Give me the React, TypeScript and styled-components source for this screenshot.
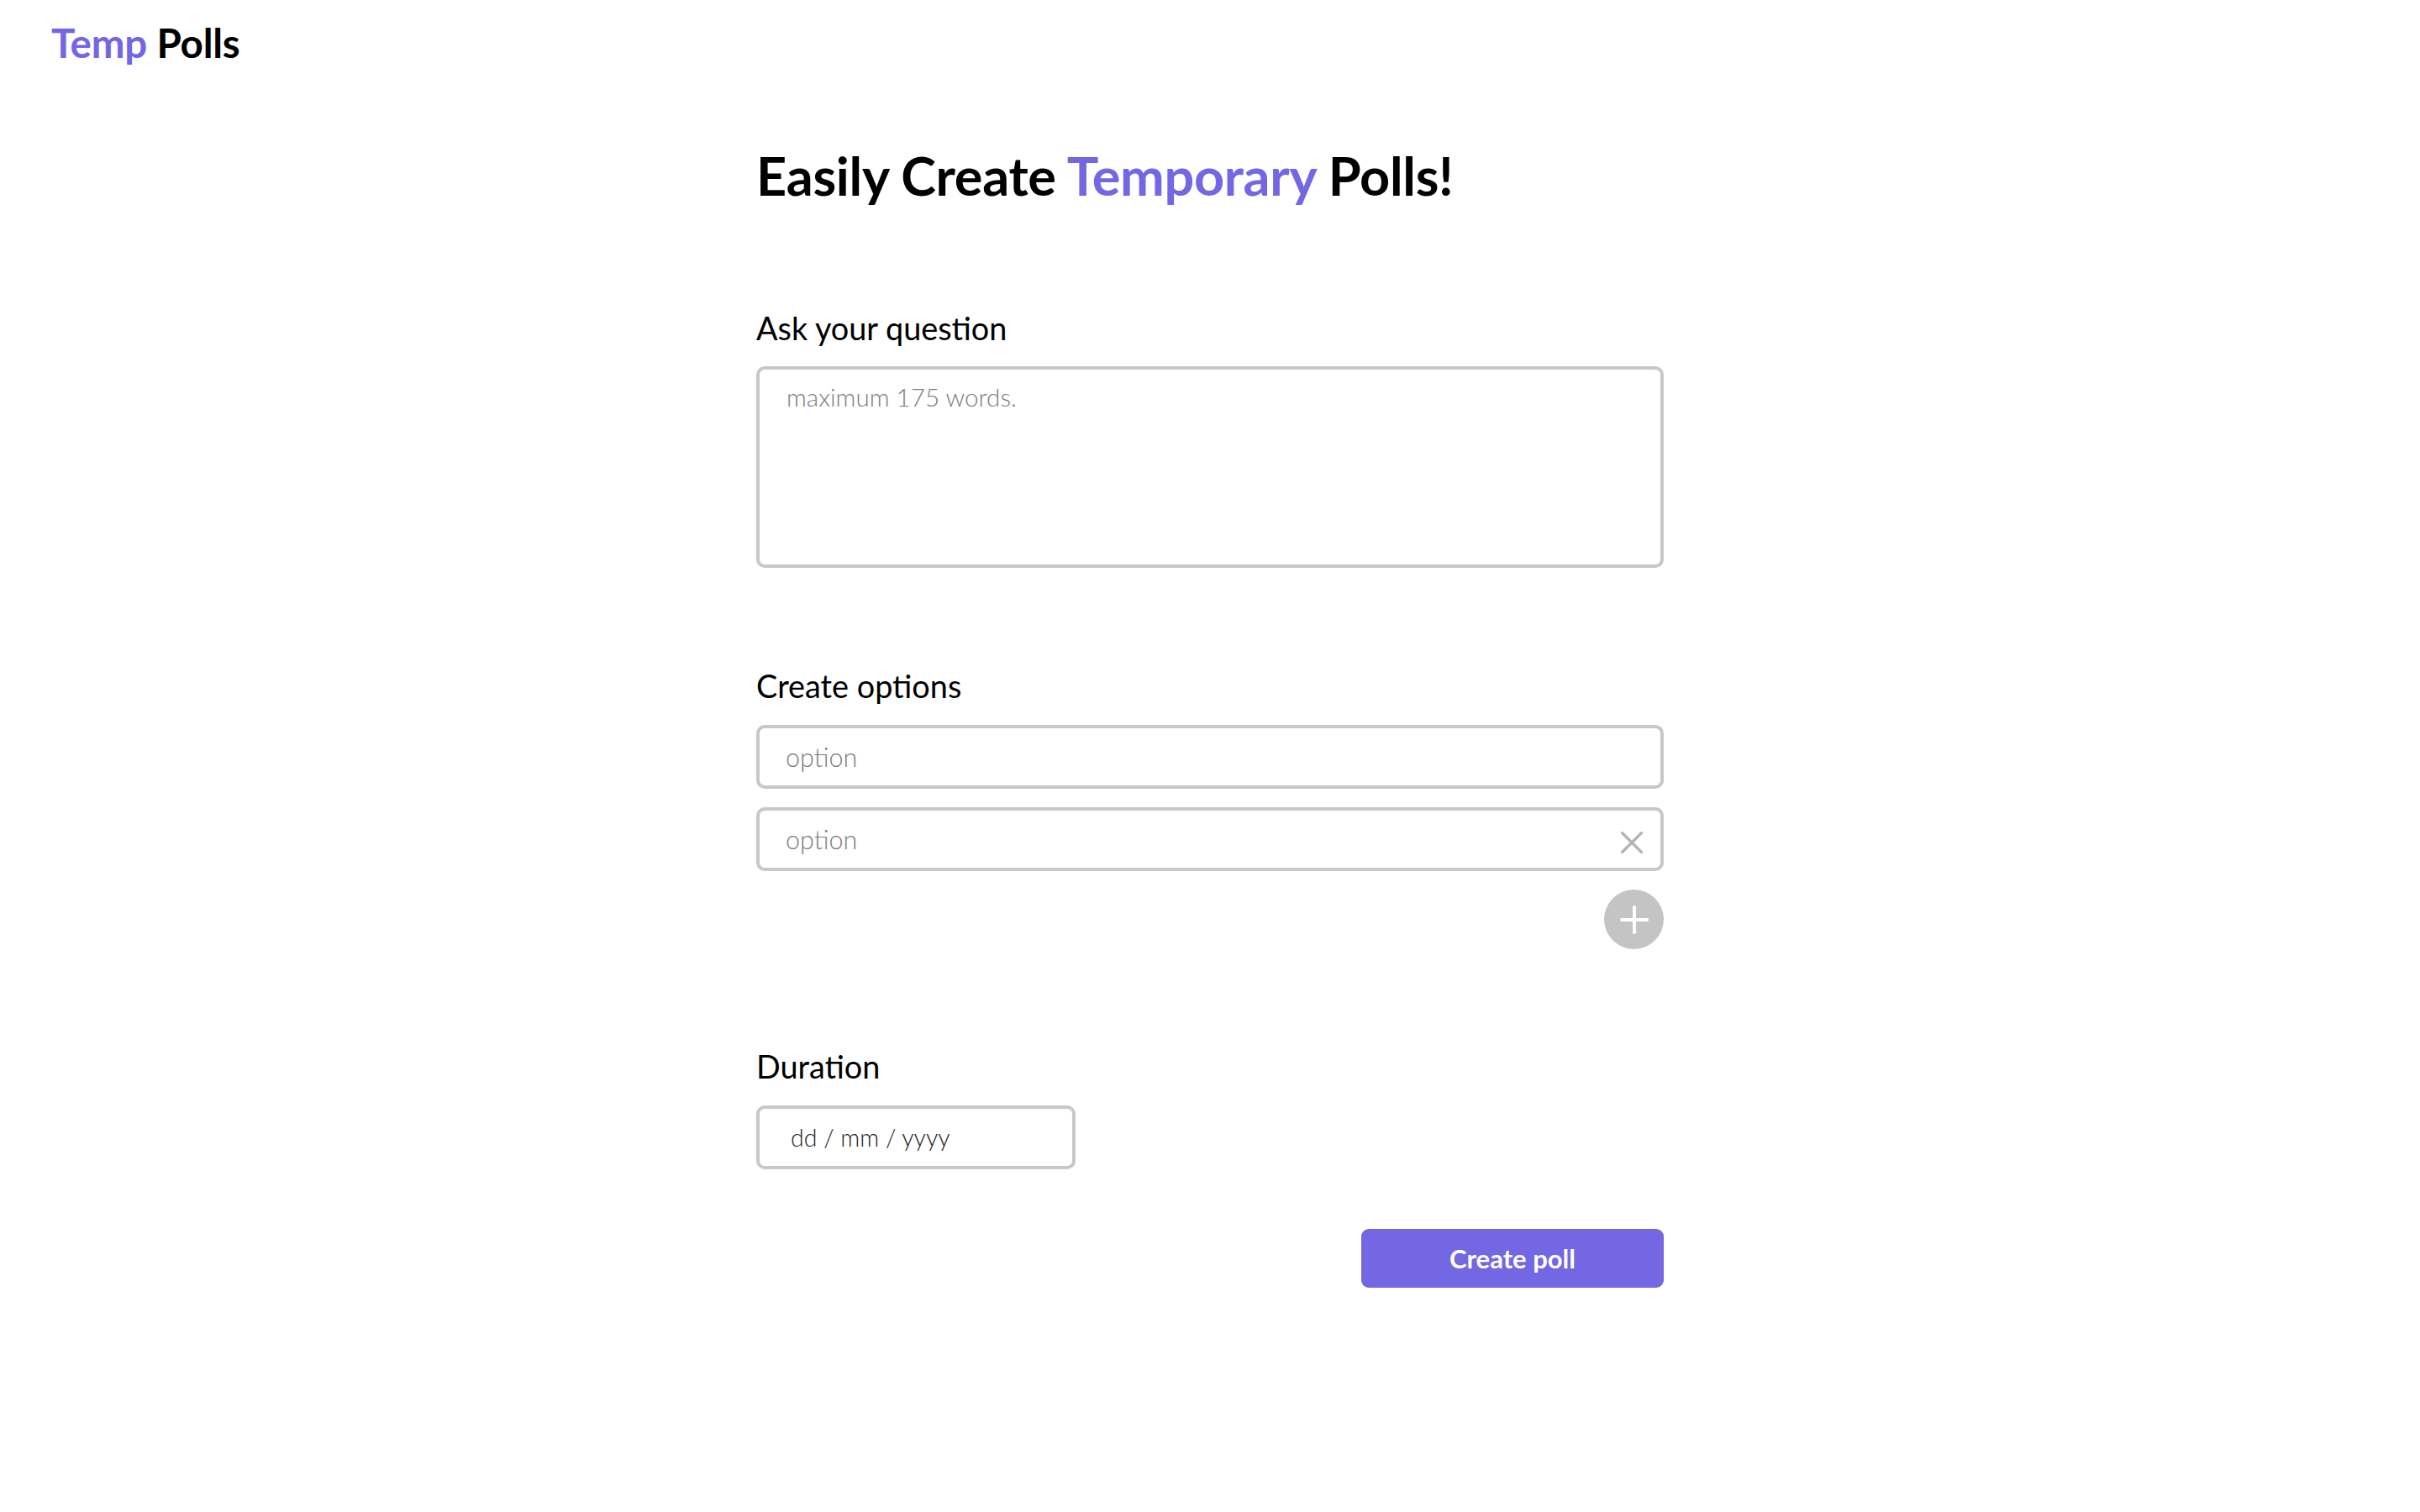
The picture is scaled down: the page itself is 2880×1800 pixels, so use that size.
import React from "react";
import styled, { createGlobalStyle } from "styled-components";

const GlobalStyle = createGlobalStyle`
  html, body {
    margin: 0;
    padding: 0;
    background: #ffffff;
  }
  body {
    font-family: Lato, "Open Sans", "Noto Sans", sans-serif;
    color: #000000;
  }
  * { box-sizing: border-box; }
`;

const PURPLE = "#7367e3";
const BORDER = "#c8c8c8";

const Header = styled.header`
  padding: 27px 0 0 61px;
`;

const Logo = styled.div`
  font-size: 47.5px;
  line-height: 1;
  font-weight: 700;
  letter-spacing: -0.2px;
`;

const Accent = styled.span`
  color: ${PURPLE};
`;

const Main = styled.main`
  width: 1080px;
  margin: 0 auto;
  display: flex;
  flex-direction: column;
`;

const Title = styled.h1`
  margin: 102px 0 0;
  font-size: 63px;
  line-height: 1;
  font-weight: 700;
  letter-spacing: -0.3px;
`;

const Section = styled.section<{ $gap: number }>`
  margin-top: ${(p) => p.$gap}px;
  display: flex;
  flex-direction: column;
`;

const Label = styled.label`
  display: block;
  font-size: 37.8px;
  line-height: 1;
  font-weight: 400;
  margin-bottom: 27px;
`;

const TextArea = styled.textarea`
  width: 1080px;
  height: 240px;
  border: 4px solid ${BORDER};
  border-radius: 10px;
  padding: 14px 32px;
  font-family: inherit;
  font-size: 29.6px;
  line-height: 1.3;
  font-weight: 300;
  resize: none;
  outline: none;
  &::placeholder {
    color: #7c7c7c;
  }
`;

const OptionList = styled.div`
  display: flex;
  flex-direction: column;
  gap: 22px;
`;

const OptionField = styled.div`
  height: 76px;
  border: 4px solid ${BORDER};
  border-radius: 10px;
  display: flex;
  align-items: center;
  padding: 0 21px 0 31px;
`;

const OptionInput = styled.input`
  flex: 1;
  min-width: 0;
  border: none;
  outline: none;
  padding: 0;
  background: transparent;
  font-family: inherit;
  font-size: 30.5px;
  font-weight: 300;
  color: #222;
  &::placeholder {
    color: #7c7c7c;
  }
`;

const RemoveButton = styled.button`
  width: 26px;
  height: 26px;
  margin-top: 8px;
  padding: 0;
  border: none;
  background: none;
  display: flex;
  align-items: center;
  justify-content: center;
  cursor: pointer;
`;

const AddRow = styled.div`
  display: flex;
  justify-content: flex-end;
  margin-top: 22px;
`;

const AddButton = styled.button`
  width: 71px;
  height: 71px;
  border-radius: 50%;
  border: none;
  padding: 0;
  background: #c4c4c4;
  display: flex;
  align-items: center;
  justify-content: center;
  cursor: pointer;
`;

const DateInput = styled.input`
  width: 380px;
  height: 76px;
  border: 4px solid ${BORDER};
  border-radius: 10px;
  padding: 0 0 0 37px;
  font-family: inherit;
  font-size: 28.5px;
  font-weight: 300;
  outline: none;
  &::placeholder {
    color: #1e1e1e;
  }
`;

const Actions = styled.div`
  display: flex;
  justify-content: flex-end;
  margin-top: 71px;
`;

const SubmitButton = styled.button`
  width: 360px;
  height: 70px;
  border: none;
  border-radius: 9px;
  background: ${PURPLE};
  color: #ffffff;
  font-family: inherit;
  font-size: 31px;
  font-weight: 700;
  cursor: pointer;
`;

const CloseIcon = () => (
  <svg width="26" height="26" viewBox="0 0 26 26" fill="none">
    <path d="M1.5 1.5 L24.5 24.5 M24.5 1.5 L1.5 24.5" stroke="#b4b4b4" strokeWidth="3.2" strokeLinecap="round" />
  </svg>
);

const PlusIcon = () => (
  <svg width="34" height="34" viewBox="0 0 34 34" fill="none">
    <path d="M17 2 V32 M2 17 H32" stroke="#ffffff" strokeWidth="4" strokeLinecap="round" />
  </svg>
);

export default function App() {
  return (
    <>
      <GlobalStyle />
      <Header>
        <Logo>
          <Accent>Temp</Accent> Polls
        </Logo>
      </Header>
      <Main>
        <Title>
          Easily Create <Accent>Temporary</Accent> Polls!
        </Title>

        <Section $gap={132}>
          <Label>Ask your question</Label>
          <TextArea placeholder="maximum 175 words." />
        </Section>

        <Section $gap={122}>
          <Label>Create options</Label>
          <OptionList>
            <OptionField>
              <OptionInput placeholder="option" />
            </OptionField>
            <OptionField>
              <OptionInput placeholder="option" />
              <RemoveButton aria-label="Remove option">
                <CloseIcon />
              </RemoveButton>
            </OptionField>
          </OptionList>
          <AddRow>
            <AddButton aria-label="Add option">
              <PlusIcon />
            </AddButton>
          </AddRow>
        </Section>

        <Section $gap={121}>
          <Label>Duration</Label>
          <DateInput placeholder="dd / mm / yyyy" />
        </Section>

        <Actions>
          <SubmitButton>Create poll</SubmitButton>
        </Actions>
      </Main>
    </>
  );
}
